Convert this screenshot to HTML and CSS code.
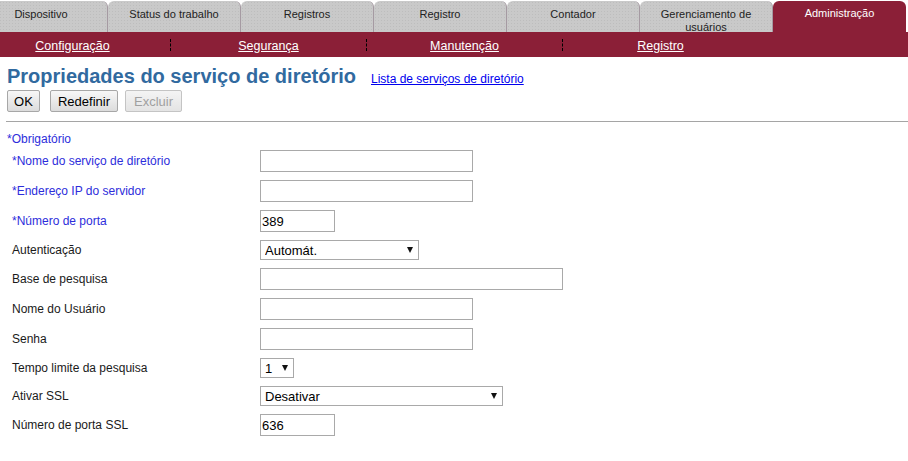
FILE: index.html
```html
<!DOCTYPE html>
<html lang="pt">
<head>
<meta charset="utf-8">
<title>Propriedades do serviço de diretório</title>
<link rel="stylesheet" href="styles.css">
</head>
<body>
<div class="tabs">
  <div class="tab first">Dispositivo</div>
  <div class="tab">Status do trabalho</div>
  <div class="tab">Registros</div>
  <div class="tab">Registro</div>
  <div class="tab">Contador</div>
  <div class="tab">Gerenciamento de usuários</div>
  <div class="tab active">Administração</div>
</div>
<div class="subnav">
  <div class="cell"><a href="#">Configuração</a></div><div class="sep"></div>
  <div class="cell"><a href="#">Segurança</a></div><div class="sep"></div>
  <div class="cell"><a href="#">Manutenção</a></div><div class="sep"></div>
  <div class="cell"><a href="#">Registro</a></div>
</div>
<div class="content">
  <div class="titlebar">
    <h1 class="title">Propriedades do serviço de diretório</h1>
    <a class="titlelink" href="#">Lista de serviços de diretório</a>
  </div>
  <div class="buttons">
    <button class="btn btn-ok">OK</button>
    <button class="btn btn-reset">Redefinir</button>
    <button class="btn" disabled>Excluir</button>
  </div>
  <div class="rule"></div>
  <div class="required-note">*Obrigatório</div>
  <table class="form">
    <tr><td class="lbl req">*Nome do serviço de diretório</td><td><input class="inp w213" type="text"></td></tr>
    <tr><td class="lbl req">*Endereço IP do servidor</td><td><input class="inp w213" type="text"></td></tr>
    <tr><td class="lbl req">*Número de porta</td><td><input class="inp w75" type="text" value="389"></td></tr>
    <tr><td class="lbl">Autenticação</td><td><span class="sel w159"><select><option>Automát.</option></select></span></td></tr>
    <tr><td class="lbl">Base de pesquisa</td><td><input class="inp w303" type="text"></td></tr>
    <tr><td class="lbl">Nome do Usuário</td><td><input class="inp w213" type="text"></td></tr>
    <tr><td class="lbl">Senha</td><td><input class="inp w213" type="password"></td></tr>
    <tr><td class="lbl">Tempo limite da pesquisa</td><td><span class="sel w34"><select><option>1</option></select></span></td></tr>
    <tr><td class="lbl">Ativar SSL</td><td><span class="sel w243"><select><option>Desativar</option></select></span></td></tr>
    <tr><td class="lbl">Número de porta SSL</td><td><input class="inp w75" type="text" value="636"></td></tr>
  </table>
</div>
</body>
</html>
```

FILE: styles.css
```css
html, body {
  margin: 0;
  padding: 0;
  background: #fff;
  font-family: "Liberation Sans", Arial, sans-serif;
  overflow: hidden;
}

.tabs {
  display: flex;
  margin-left: -25px;
  margin-top: 1px;
  height: 31px;
}

.tab {
  box-sizing: border-box;
  width: 133px;
  height: 31px;
  flex: none;
  overflow: hidden;
  padding: 7px 4px 0;
  text-align: center;
  font-size: 11px;
  line-height: 13px;
  color: #222;
  background-color: #c9c9c9;
  background-image: radial-gradient(circle, #bdbdbd 0.6px, transparent 0.8px);
  background-size: 3px 3px;
  border-radius: 6px 6px 0 0;
  border-right: 1px solid #a59aa2;
}

.tab.active {
  background: #8b1f37;
  color: #fff;
  border-right: none;
  padding-top: 6px;
}

.subnav {
  display: flex;
  align-items: center;
  margin-left: -25px;
  height: 25px;
  background: #8b1f37;
}

.cell {
  width: 195px;
  text-align: center;
  flex: none;
}

.cell a {
  color: #fff;
  font-size: 12.5px;
  text-decoration: underline;
}

.sep {
  width: 0;
  height: 12px;
  border-left: 1px dashed #000;
  flex: none;
}

.content {
  padding: 0 0 0 7px;
}

.titlebar {
  display: flex;
  align-items: baseline;
  margin-top: 7px;
  height: 25px;
}

.title {
  margin: 0;
  font-size: 20px;
  font-weight: bold;
  color: #316a9f;
  line-height: 24px;
}

.titlelink {
  margin-left: 15px;
  font-size: 12px;
  color: #0000ee;
}

.buttons {
  display: flex;
  margin-top: 1px;
  height: 22px;
}

.btn {
  box-sizing: border-box;
  height: 22px;
  padding: 0 7px;
  font-family: "Liberation Sans", Arial, sans-serif;
  font-size: 13px;
  color: #000;
  background: linear-gradient(#f7f7f7, #dcdcdc);
  border: 1px solid #a7a7a7;
  border-radius: 2px;
}

.btn-ok {
  width: 33px;
  padding: 0;
  margin-right: 10px;
}

.btn-reset {
  width: 68px;
  padding: 0;
  margin-right: 7px;
}

.btn[disabled] {
  width: 57px;
  padding: 0;
  color: #a0a0a0;
  border-color: #c4c4c4;
  background: linear-gradient(#f4f4f4, #e4e4e4);
}

.rule {
  height: 1px;
  margin: 9px 0 0 -1px;
  background: #a5a5a5;
}

.required-note {
  margin-top: 10px;
  font-size: 12px;
  line-height: 14px;
  color: #2d2ddb;
}

.form {
  border-collapse: collapse;
  margin-top: 0;
}

.form td {
  padding: 4px 0;
  vertical-align: middle;
}

.lbl {
  width: 253px;
  padding-left: 5px !important;
  font-size: 12px;
  color: #1a1a1a;
  box-sizing: border-box;
}

.lbl.req {
  color: #2d2ddb;
}

.inp {
  display: block;
  box-sizing: border-box;
  height: 22px;
  margin: 0;
  padding: 0 1px;
  border: 1px solid #a9a9a9;
  font-family: "Liberation Sans", Arial, sans-serif;
  font-size: 13px;
  color: #000;
  background: #fff;
  outline: none;
}

.w213 { width: 213px; }
.w75 { width: 75px; }
.w303 { width: 303px; }

.sel {
  position: relative;
  display: block;
  height: 20px;
}

.sel select {
  -webkit-appearance: none;
  appearance: none;
  box-sizing: border-box;
  width: 100%;
  height: 20px;
  margin: 0;
  padding: 0 0 0 4px;
  border: 1px solid #a9a9a9;
  border-radius: 0;
  background: #fff;
  font-family: "Liberation Sans", Arial, sans-serif;
  font-size: 13px;
  color: #000;
}

.sel::after {
  content: "";
  position: absolute;
  right: 6px;
  top: 7px;
  width: 0;
  height: 0;
  border-left: 3px solid transparent;
  border-right: 3px solid transparent;
  border-top: 6px solid #111;
  pointer-events: none;
}

.w159 { width: 159px; }
.w34 { width: 34px; }
.w243 { width: 243px; }
```
